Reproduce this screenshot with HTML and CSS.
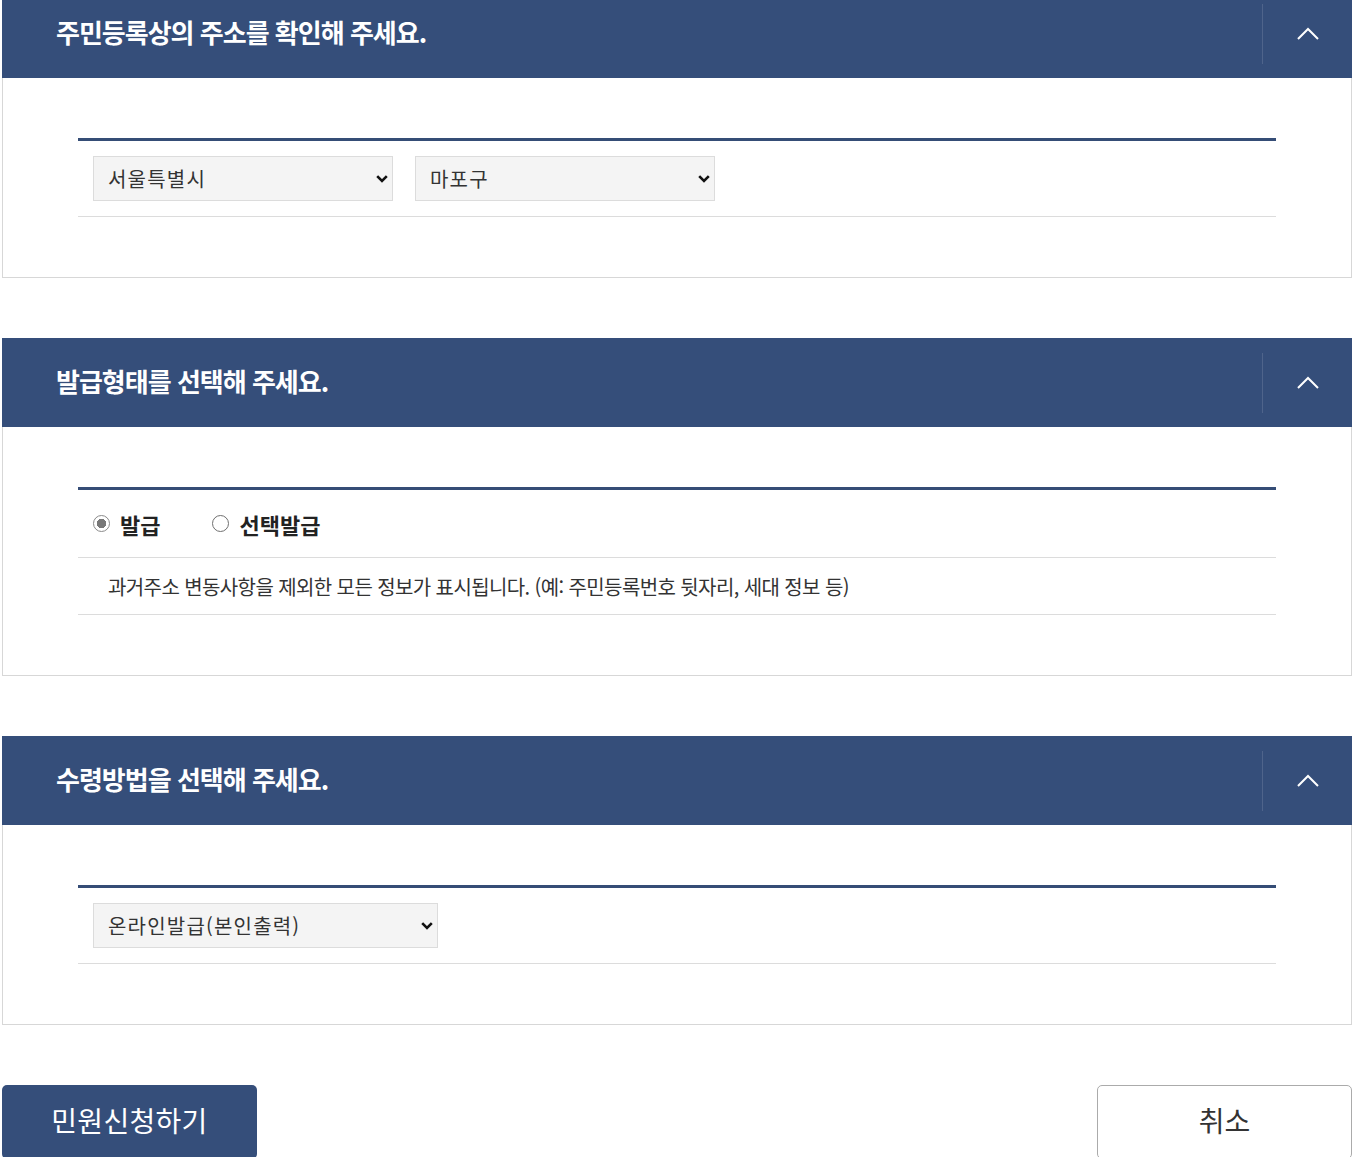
FILE: index.html
```html
<!DOCTYPE html>
<html lang="ko">
<head>
  <meta charset="UTF-8" />
  <meta name="viewport" content="width=device-width, initial-scale=1.0"/>
  <title>민원신청</title>
  <link rel="stylesheet" href="styles.css">
</head>
<body>
  <div class="page">

    <div class="panel">
      <div class="panel-head">
        <h2 class="panel-title">주민등록상의 주소를 확인해 주세요.</h2>
        <button class="toggle" aria-label="접기">
          <svg width="22" height="13" viewBox="0 0 22 13"><path d="M1 12 L11 2 L21 12" fill="none" stroke="#fff" stroke-width="2"/></svg>
        </button>
      </div>
      <div class="panel-body">
        <div class="form-table">
          <div class="form-row">
            <div class="select-wrap select-city">
              <select>
                <option>서울특별시</option>
              </select>
              <svg class="select-arrow" width="12" height="8" viewBox="0 0 12 8"><path d="M1.2 1.2 L6 6 L10.8 1.2" fill="none" stroke="#111" stroke-width="2.6"/></svg>
            </div>
            <div class="select-wrap select-city">
              <select>
                <option>마포구</option>
              </select>
              <svg class="select-arrow" width="12" height="8" viewBox="0 0 12 8"><path d="M1.2 1.2 L6 6 L10.8 1.2" fill="none" stroke="#111" stroke-width="2.6"/></svg>
            </div>
          </div>
        </div>
      </div>
    </div>

    <div class="panel">
      <div class="panel-head">
        <h2 class="panel-title">발급형태를 선택해 주세요.</h2>
        <button class="toggle" aria-label="접기">
          <svg width="22" height="13" viewBox="0 0 22 13"><path d="M1 12 L11 2 L21 12" fill="none" stroke="#fff" stroke-width="2"/></svg>
        </button>
      </div>
      <div class="panel-body">
        <div class="form-table">
          <div class="form-row radio-row">
            <label class="radio">
              <span class="radio-dot checked"></span>
              <span class="radio-text">발급</span>
            </label>
            <label class="radio">
              <span class="radio-dot"></span>
              <span class="radio-text">선택발급</span>
            </label>
          </div>
          <div class="form-row desc-row">
            과거주소 변동사항을 제외한 모든 정보가 표시됩니다. (예: 주민등록번호 뒷자리, 세대 정보 등)
          </div>
        </div>
      </div>
    </div>

    <div class="panel">
      <div class="panel-head">
        <h2 class="panel-title">수령방법을 선택해 주세요.</h2>
        <button class="toggle" aria-label="접기">
          <svg width="22" height="13" viewBox="0 0 22 13"><path d="M1 12 L11 2 L21 12" fill="none" stroke="#fff" stroke-width="2"/></svg>
        </button>
      </div>
      <div class="panel-body">
        <div class="form-table">
          <div class="form-row">
            <div class="select-wrap select-method">
              <select>
                <option>온라인발급(본인출력)</option>
              </select>
              <svg class="select-arrow" width="12" height="8" viewBox="0 0 12 8"><path d="M1.2 1.2 L6 6 L10.8 1.2" fill="none" stroke="#111" stroke-width="2.6"/></svg>
            </div>
          </div>
        </div>
      </div>
    </div>

    <div class="actions">
      <button class="btn btn-primary">민원신청하기</button>
      <button class="btn btn-cancel">취소</button>
    </div>

  </div>
</body>
</html>
```

FILE: styles.css
```css
body {
  margin: 0;
  font-family: "Noto Sans CJK KR", "Noto Sans", sans-serif;
  background-color: #fff;
  color: #333;
}

.page {
  width: 1350px;
  margin: -11px 0 0 2px;
}

.panel {
  margin-bottom: 60px;
}

.panel-head {
  display: flex;
  align-items: center;
  justify-content: space-between;
  height: 89px;
  background-color: #354e7a;
}

.panel-title {
  margin: 0;
  padding: 0 0 4px 54px;
  font-size: 26px;
  font-weight: 700;
  letter-spacing: -1px;
  color: #fff;
}

.toggle {
  display: flex;
  align-items: center;
  justify-content: center;
  width: 90px;
  height: 60px;
  padding: 0;
  border: none;
  border-left: 1px solid rgba(255, 255, 255, 0.13);
  background: transparent;
  cursor: pointer;
}

.panel-body {
  padding: 60px 75px;
  border: 1px solid #d7d7d7;
  border-top: none;
}

.form-table {
  border-top: 3px solid #354d76;
}

.form-row {
  display: flex;
  align-items: center;
  gap: 22px;
  padding: 15px;
  border-bottom: 1px solid #dcdcdc;
}

.select-wrap {
  position: relative;
}

.select-wrap select {
  appearance: none;
  -webkit-appearance: none;
  width: 100%;
  height: 45px;
  padding: 0 30px 0 14px;
  border: 1px solid #dcdcdc;
  border-radius: 0;
  background-color: #f4f4f4;
  font-family: inherit;
  font-size: 20px;
  letter-spacing: 1.2px;
  color: #333;
}

.select-city {
  width: 300px;
}

.select-method {
  width: 345px;
}

.select-arrow {
  position: absolute;
  right: 5px;
  top: 19px;
  pointer-events: none;
}

.radio-row {
  height: 67px;
  padding: 0 15px;
  gap: 52px;
}

.radio {
  display: flex;
  align-items: center;
  gap: 10px;
  cursor: pointer;
}

.radio-dot {
  box-sizing: border-box;
  width: 17px;
  height: 17px;
  border: 1px solid #6f6f6f;
  border-radius: 50%;
  background: #fff;
}

.radio-dot.checked {
  border-color: #8a8a8a;
  background: radial-gradient(circle, #787878 0 4.5px, #fff 5px);
}

.radio-text {
  font-size: 22px;
  font-weight: 700;
  color: #222;
}

.desc-row {
  height: 56px;
  padding: 0 30px;
  font-size: 20px;
  letter-spacing: -0.6px;
  color: #333;
}

.actions {
  display: flex;
  justify-content: space-between;
}

.btn {
  width: 255px;
  height: 74px;
  padding: 0 0 4px;
  border-radius: 5px;
  font-family: inherit;
  font-size: 28px;
  cursor: pointer;
}

.btn-primary {
  border: none;
  background-color: #354e7a;
  color: #fff;
  letter-spacing: 0.3px;
}

.btn-cancel {
  border: 1px solid #ababab;
  background-color: #fff;
  color: #333;
}
```
